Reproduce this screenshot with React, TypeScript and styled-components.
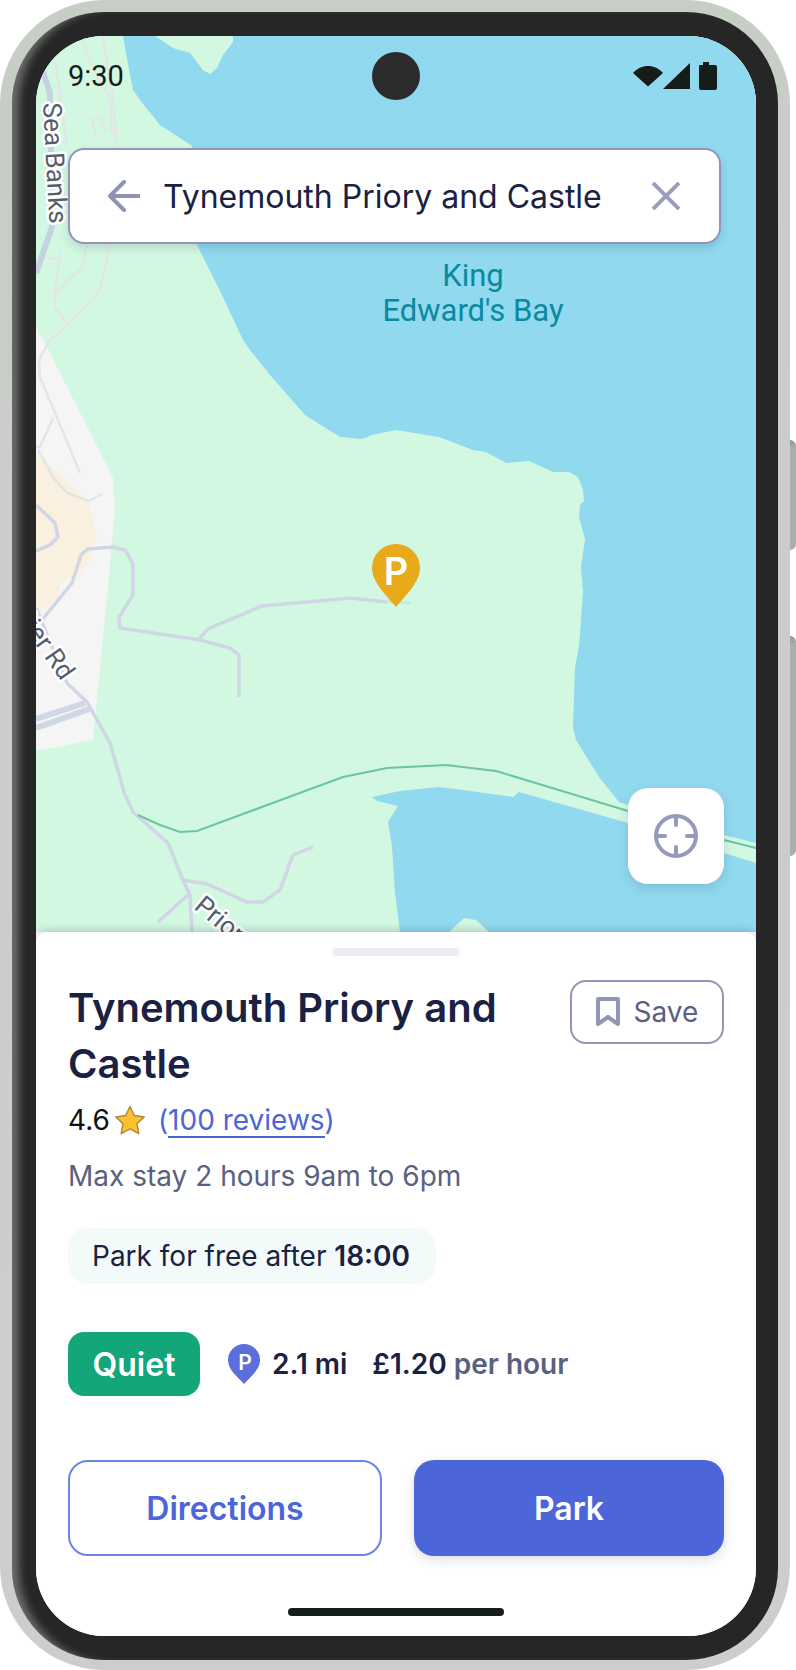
import React from "react";
import styled, { createGlobalStyle } from "styled-components";

const Global = createGlobalStyle`
  html, body { margin: 0; padding: 0; background: #fff; }
  * { box-sizing: border-box; }
  body { font-family: Inter, "Liberation Sans", sans-serif; }
`;

const Page = styled.div`
  position: relative;
  width: 796px;
  height: 1670px;
  overflow: hidden;
`;
const SideKey = styled.div<{ $top: number; $h: number }>`
  position: absolute;
  left: 790px;
  top: ${(p) => p.$top}px;
  width: 6px;
  height: ${(p) => p.$h}px;
  border-radius: 0 6px 6px 0;
  background: linear-gradient(180deg, #8f9693 0, #a8b0ac 8px, #a8b0ac 100%);
`;
const Phone = styled.div`
  width: 790px;
  height: 1670px;
  padding: 12px 12px 10px;
  border-radius: 104px;
  background: linear-gradient(180deg, #c6cec5 0, #cbcdca 30%, #cdcdcd 100%);
`;
const Bezel = styled.div`
  width: 766px;
  height: 1648px;
  padding: 24px 22px 24px 24px;
  border-radius: 92px;
  background: #262626;
  box-shadow: inset 12px 0 9px -5px rgba(255, 255, 255, 0.32);
`;
const Screen = styled.div`
  width: 720px;
  height: 1600px;
  border-radius: 68px;
  overflow: hidden;
  background: #fff;
  display: flex;
  flex-direction: column;
`;
const MapArea = styled.div`
  position: relative;
  height: 896px;
  flex: none;
  background: #d2f8e2;
  padding: 0 32px;
  display: flex;
  flex-direction: column;
`;
const MapDrawing = styled.svg`
  position: absolute;
  inset: 0;
  width: 720px;
  height: 896px;
`;
const StatusBar = styled.div`
  position: relative;
  height: 64px;
  margin: 16px 0 16px;
  display: flex;
  align-items: flex-start;
  justify-content: space-between;
`;
const Clock = styled.span`
  font-family: Roboto, sans-serif;
  font-size: 29px;
  line-height: 48px;
  color: #151c1a;
`;
const Camera = styled.div`
  position: absolute;
  left: 304px;
  top: 0;
  width: 48px;
  height: 48px;
  border-radius: 50%;
  background: #2c2c2c;
`;
const StatusIcons = styled.div`
  display: flex;
  align-items: center;
  margin: 10px 6px 0 0;
`;
const SearchBar = styled.div`
  position: relative;
  width: 653px;
  height: 96px;
  margin-top: 16px;
  flex: none;
  display: flex;
  align-items: center;
  padding: 0 39px 0 38px;
  background: #fff;
  border: 2px solid #9295b7;
  border-radius: 16px;
  box-shadow: 0 4px 10px rgba(26, 32, 64, 0.14);
`;
const SearchText = styled.span`
  flex: 1;
  margin: 1px 0 0 23px;
  font-size: 32px;
  line-height: 40px;
  color: #1a2142;
  white-space: nowrap;
`;
const LocateButton = styled.div`
  position: absolute;
  right: 32px;
  bottom: 48px;
  width: 96px;
  height: 96px;
  border-radius: 20px;
  background: #fff;
  box-shadow: 0 4px 12px rgba(26, 32, 64, 0.14);
  display: flex;
  align-items: center;
  justify-content: center;
`;
const Sheet = styled.div`
  position: relative;
  flex: 1;
  display: flex;
  flex-direction: column;
  background: #fff;
  border-radius: 10px 10px 0 0;
  box-shadow: 0 -2px 8px rgba(0, 0, 0, 0.18);
`;
const Handle = styled.div`
  width: 128px;
  height: 8px;
  margin: 16px auto 0;
  border-radius: 4px;
  background: #ecedf2;
`;
const SheetBody = styled.div`
  padding: 24px 32px 0;
`;
const Header = styled.div`
  display: flex;
  justify-content: space-between;
  align-items: flex-start;
`;
const Title = styled.h1`
  margin: 0;
  width: 470px;
  font-size: 40px;
  line-height: 56px;
  font-weight: 600;
  color: #1a2142;
`;
const SaveButton = styled.div`
  width: 154px;
  height: 64px;
  display: flex;
  align-items: center;
  justify-content: center;
  gap: 14px;
  border: 2px solid #9295b7;
  border-radius: 16px;
  font-size: 28px;
  color: #595f80;
`;
const RatingRow = styled.div`
  margin-top: 10px;
  height: 36px;
  display: flex;
  align-items: center;
  font-size: 28px;
  line-height: 36px;
  color: #111;
`;
const StarIcon = styled.svg`
  margin: 0 12px 0 4px;
  flex: none;
`;
const Reviews = styled.span`
  color: #4c65d9;
`;
const ReviewsLink = styled.span`
  display: inline-block;
  height: 36px;
  border-bottom: 2px solid #4c65d9;
`;
const Stay = styled.div`
  margin-top: 20px;
  font-size: 28px;
  line-height: 36px;
  color: #5a6180;
`;
const Chip = styled.div`
  width: 368px;
  height: 56px;
  margin-top: 34px;
  padding-left: 24px;
  display: flex;
  align-items: center;
  border-radius: 20px;
  background: #f2fbfa;
  font-size: 28px;
  color: #1a2142;
  white-space: pre;
`;
const Strong = styled.b`
  font-weight: 600;
`;
const InfoRow = styled.div`
  margin-top: 48px;
  height: 64px;
  display: flex;
  align-items: center;
`;
const QuietBadge = styled.div`
  width: 132px;
  height: 64px;
  display: flex;
  align-items: center;
  justify-content: center;
  border-radius: 16px;
  background: #12a679;
  color: #fff;
  font-size: 32px;
  font-weight: 600;
`;
const PinIcon = styled.svg`
  margin: 0 12px 0 28px;
  flex: none;
`;
const Stat = styled.span<{ $gap?: number }>`
  margin-left: ${(p) => p.$gap ?? 0}px;
  font-size: 28px;
  font-weight: 600;
  color: #1a2142;
  white-space: pre;
`;
const Muted = styled.span`
  font-size: 28px;
  color: #5a6180;
`;
const Actions = styled.div`
  margin-top: 64px;
  display: flex;
  gap: 32px;
`;
const ActionButton = styled.div<{ $primary?: boolean }>`
  flex: 1;
  height: 96px;
  display: flex;
  align-items: center;
  justify-content: center;
  border-radius: 20px;
  font-size: 32px;
  font-weight: 600;
  color: ${(p) => (p.$primary ? "#fff" : "#4c65d9")};
  background: ${(p) => (p.$primary ? "#4c65d9" : "#fff")};
  border: ${(p) => (p.$primary ? "none" : "2px solid #6b83e3")};
  box-shadow: ${(p) => (p.$primary ? "0 4px 12px rgba(26,32,64,.14)" : "none")};
`;
const HomeIndicator = styled.div`
  width: 216px;
  height: 8px;
  margin: 52px auto 0;
  border-radius: 4px;
  background: #151c1a;
`;

const MapLabel = styled.text`
  font-family: Roboto, sans-serif;
  font-size: 26px;
  fill: #545d6e;
  stroke: #fff;
  stroke-width: 5px;
  paint-order: stroke;
  stroke-linejoin: round;
`;
const BayLabel = styled.text`
  font-family: Roboto, sans-serif;
  font-size: 31px;
  fill: #0b8a9e;
  text-anchor: middle;
`;
const PinLetter = styled.text`
  font-family: Inter, sans-serif;
  font-weight: 600;
  fill: #fff;
  text-anchor: middle;
`;

const WATER_TOP =
  "123,36 130,75 133,90 140,100 160,125 192,146 196,243 222,295 243,340 250,350 270,375 305,415 340,437 362,439 372,435 396,430 439,437 473,450 486,452 506,463 529,461 553,472 569,472 578,477 583,490 584,501 580,505 579,517 585,539 581,567 583,592 579,647 575,667 573,727 576,740 599,777 619,802 628,805 724,835 756,843 756,36";
const LAND_TOP = "155,36 173,48 190,53 203,70 210,74 217,68 223,55 233,42 233,36";
const WATER_LOW =
  "756,863 724,853 628,823 519,792 513,797 463,790 439,787 400,791 372,797 377,801 398,806 388,822 392,847 395,893 400,932 449,932 464,918 476,920 489,932 756,932";
const GREY_AREA = "36,328 45,343 113,478 115,510 99,680 93,740 36,751";
const BEIGE_AREA = "36,457 53,468 87,500 97,533 90,560 80,573 60,583 60,597 36,613";

const ROADS = [
  "36,505 55,523 58,537 50,545 36,551",
  "42,620 72,583 81,555 88,549 113,547 125,550 133,564 133,595 119,617 120,628 200,640 230,648 239,655 239,697",
  "199,639 208,629 262,606 340,599 350,598 387,602",
  "36,608 67,683 87,702 110,743 125,795 133,812 168,843 183,880 190,895 192,932",
  "183,880 207,884 247,902 263,902 280,890 293,855 313,847",
  "188,895 158,922",
];
const FAINT_ROADS = [
  "103,36 113,100 117,147",
  "82,40 92,67 110,97 112,132 117,138",
  "92,120 97,140",
  "92,120 100,118 107,132",
  "55,57 67,147",
  "87,245 82,267 55,293 60,253",
  "55,293 55,307 68,325 100,290 110,245",
  "68,325 50,340 39,360 40,377 80,473",
  "45,257 60,260",
  "53,418 40,447 36,447",
  "38,450 55,480 67,493 89,501 102,494",
];
const TRAIL =
  "138,815 160,825 180,832 197,831 343,777 387,768 446,765 496,771 628,811 724,840 756,848";

const MapBackground = () => (
  <MapDrawing viewBox="36 36 720 896">
    <polygon points={WATER_TOP} fill="#90d9ef" />
    <polygon points={WATER_LOW} fill="#90d9ef" />
    <polygon points={LAND_TOP} fill="#d2f8e2" />
    <polygon points={GREY_AREA} fill="#f5f5f5" />
    <polygon points={BEIGE_AREA} fill="#f9f0df" />
    <polyline points="43,72 50,93 52,227 36,273" fill="none" stroke="#c5d2e0" strokeWidth="6" />
    {FAINT_ROADS.map((p) => (
      <polyline key={p} points={p} fill="none" stroke="#e2e6e6" strokeWidth="2.5" />
    ))}
    {ROADS.map((p) => (
      <polyline key={p} points={p} fill="none" stroke="#d0d6e4" strokeWidth="3.5" />
    ))}
    <polyline points="36,719 85,703" fill="none" stroke="#cfd8e5" strokeWidth="6" />
    <polyline points="36,728 92,708" fill="none" stroke="#cfd8e5" strokeWidth="6" />
    <polyline points="387,602 411,603" fill="none" stroke="#c2ecdf" strokeWidth="3" />
    <polyline points={TRAIL} fill="none" stroke="#6cc4a1" strokeWidth="2" />
    <MapLabel transform="translate(43,103) rotate(87)">Sea Banks</MapLabel>
    <MapLabel transform="translate(14,614) rotate(55)">Pier Rd</MapLabel>
    <MapLabel transform="translate(193,908) rotate(40)">Priory Rd</MapLabel>
    <BayLabel x="473" y="286">King</BayLabel>
    <BayLabel x="473" y="321">Edward's Bay</BayLabel>
    <path
      d="M396 607 C386 595 372 582 372 568 A24 24 0 0 1 420 568 C420 582 406 595 396 607 Z"
      fill="#e8a91a"
    />
    <PinLetter x="396" y="585" fontSize="38">P</PinLetter>
  </MapDrawing>
);

const App = () => (
  <Page>
    <Global />
    <SideKey $top={440} $h={110} />
    <SideKey $top={636} $h={220} />
    <Phone>
      <Bezel>
        <Screen>
          <MapArea>
            <MapBackground />
            <StatusBar>
              <Clock>9:30</Clock>
              <Camera />
              <StatusIcons>
                <svg width="30" height="22" viewBox="0 0 30 22">
                  <path d="M0 8 C8 -1.5 22 -1.5 30 8 L15 21.5 Z" fill="#151c1a" />
                </svg>
                <svg width="27" height="28" viewBox="0 0 27 28">
                  <path d="M27 1 V27 H0 Z" fill="#151c1a" />
                </svg>
                <svg width="28" height="28" viewBox="0 0 28 28">
                  <path
                    d="M9 4 Q9 3 10 3 H13 V0 H19 V3 H25 Q27 3 27 5 V26 Q27 28 25 28 H11 Q9 28 9 26 Z"
                    fill="#151c1a"
                  />
                </svg>
              </StatusIcons>
            </StatusBar>
            <SearchBar>
              <svg width="32" height="32" viewBox="0 0 32 32" fill="none" stroke="#8f94b5" strokeWidth="4" strokeLinecap="round" strokeLinejoin="round">
                <path d="M31 16 H2 M16 2 L2 16 L16 30" />
              </svg>
              <SearchText>Tynemouth Priory and Castle</SearchText>
              <svg width="28" height="28" viewBox="0 0 28 28" fill="none" stroke="#9a9dbd" strokeWidth="4">
                <path d="M1 1 L27 27 M27 1 L1 27" />
              </svg>
            </SearchBar>
            <LocateButton>
              <svg width="44" height="44" viewBox="0 0 44 44" fill="none" stroke="#9699bb" strokeWidth="4" strokeLinecap="round">
                <circle cx="22" cy="22" r="20" />
                <path d="M22 3 V11 M22 33 V41 M3 22 H11 M33 22 H41" />
              </svg>
            </LocateButton>
          </MapArea>
          <Sheet>
            <Handle />
            <SheetBody>
              <Header>
                <Title>Tynemouth Priory and Castle</Title>
                <SaveButton>
                  <svg width="24" height="30" viewBox="0 0 24 30" fill="none" stroke="#9196b8" strokeWidth="4" strokeLinejoin="round">
                    <path d="M2 2 H22 V27 L12 20 L2 27 Z" />
                  </svg>
                  Save
                </SaveButton>
              </Header>
              <RatingRow>
                4.6
                <StarIcon width="32" height="30" viewBox="0 0 32 30">
                  <path
                    d="M16 1.5 L20.3 10.6 L30.2 11.9 L23 18.8 L24.8 28.6 L16 23.8 L7.2 28.6 L9 18.8 L1.8 11.9 L11.7 10.6 Z"
                    fill="#fdc02f"
                    stroke="#b08a3a"
                    strokeWidth="1.5"
                    strokeLinejoin="round"
                  />
                </StarIcon>
                <Reviews>
                  (<ReviewsLink>100 reviews</ReviewsLink>)
                </Reviews>
              </RatingRow>
              <Stay>Max stay 2 hours 9am to 6pm</Stay>
              <Chip>
                Park for free after <Strong>18:00</Strong>
              </Chip>
              <InfoRow>
                <QuietBadge>Quiet</QuietBadge>
                <PinIcon width="32" height="40" viewBox="0 0 32 40">
                  <path d="M16 40 C10 33 0 26 0 16 A16 16 0 0 1 32 16 C32 26 22 33 16 40 Z" fill="#5a6fdc" />
                  <PinLetter x="17" y="26" fontSize="21">P</PinLetter>
                </PinIcon>
                <Stat>2.1 mi</Stat>
                <Stat $gap={25}>
                  £1.20 <Muted>per hour</Muted>
                </Stat>
              </InfoRow>
              <Actions>
                <ActionButton>Directions</ActionButton>
                <ActionButton $primary>Park</ActionButton>
              </Actions>
            </SheetBody>
            <HomeIndicator />
          </Sheet>
        </Screen>
      </Bezel>
    </Phone>
  </Page>
);

export default App;
